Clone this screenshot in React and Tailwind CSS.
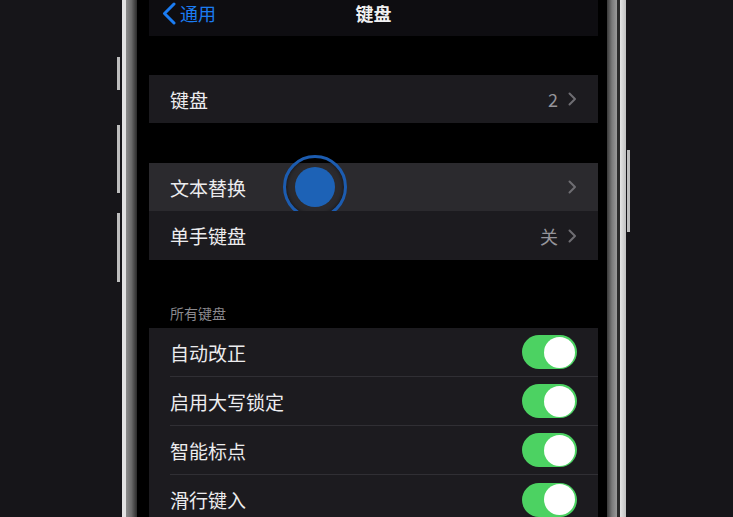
import React from "react";

const font = { fontFamily: '"Noto Sans CJK SC", "Noto Sans", sans-serif' };

function Chevron() {
  return (
    <svg width="9" height="14" viewBox="0 0 9 14" className="ml-[10px]">
      <path d="M1.5 1.5 L7 7 L1.5 12.5" fill="none" stroke="#6e6d72" strokeWidth="2" strokeLinecap="round" strokeLinejoin="round" />
    </svg>
  );
}

function Toggle() {
  return (
    <div className="w-[55px] h-[34px] rounded-full bg-[#4cd262] flex items-center justify-end pr-[2px]">
      <div className="w-[31px] h-[31px] rounded-full bg-white" />
    </div>
  );
}

function Row({ label, value, chevron, toggle, sep, h = "h-[48px]", bg = "bg-[#1c1b1f]", children }) {
  return (
    <div className={`relative shrink-0 ${h} ${bg} flex`}>
      <div className={`flex-1 ml-[21px] pr-[21px] flex items-center ${sep ? "border-b border-[#302f34]" : ""}`}>
        <span className="text-[19px] text-[#ececee] leading-none flex-1">{label}</span>
        {value && <span className="text-[18px] text-[#95949a] leading-none">{value}</span>}
        {chevron && <Chevron />}
        {toggle && <Toggle />}
      </div>
      {children}
    </div>
  );
}

export default function App() {
  return (
    <div className="w-[733px] h-[517px] overflow-hidden flex bg-[#161519]" style={font}>
      <div className="w-[117px] shrink-0" />
      <div className="w-[3px] shrink-0 flex flex-col">
        <div className="mt-[57px] h-[33px] shrink-0 bg-[#bdbdbd]" />
        <div className="mt-[35px] h-[68px] shrink-0 bg-[#bdbdbd]" />
        <div className="mt-[20px] h-[69px] shrink-0 bg-[#bdbdbd]" />
      </div>
      <div className="w-[2px] shrink-0" />
      <div className="w-[4px] shrink-0 bg-[#e2e2e2]" />
      <div className="w-[11px] shrink-0 bg-gradient-to-r from-[#8c8c8c] via-[#6a6a6a] to-[#2c2c2c]" />
      <div className="w-[470px] shrink-0 bg-black pl-[12px] pr-[9px] flex flex-col overflow-hidden">
        <div className="h-[36px] shrink-0 bg-[#0e0d11] relative">
          <div className="absolute left-[12px] top-[2px] flex items-center">
            <svg width="16" height="23" viewBox="0 0 16 23">
              <path d="M13 2 L3.5 11.5 L13 21" fill="none" stroke="#1b7cf2" strokeWidth="3" strokeLinecap="round" strokeLinejoin="round" />
            </svg>
            <span className="ml-[3px] text-[18px] text-[#1b7cf2] leading-[22px] mb-[1px]">通用</span>
          </div>
          <div className="absolute left-0 right-0 top-[1px] text-center text-[18px] font-bold text-[#f0f0f2] leading-[24px]">键盘</div>
        </div>
        <div className="mt-[39px] shrink-0">
          <Row label="键盘" value="2" chevron />
        </div>
        <div className="mt-[40px] shrink-0">
          <Row label="文本替换" chevron bg="bg-[#2b2a2e]">
            <div className="absolute left-[134px] top-[-8px] w-[64px] h-[64px] rounded-full border-[3px] border-[#1c5cb0] flex items-center justify-center shadow-[inset_0_0_4px_rgba(0,0,0,0.6)]">
              <div className="w-[40px] h-[40px] rounded-full bg-[#1d62b6]" />
            </div>
          </Row>
          <Row label="单手键盘" value="关" chevron h="h-[49px]" />
        </div>
        <div className="h-[68px] shrink-0 flex items-end pb-[8px] pl-[21px]">
          <span className="text-[14px] leading-none text-[#8a898e]">所有键盘</span>
        </div>
        <Row label="自动改正" toggle sep h="h-[49px]" />
        <Row label="启用大写锁定" toggle sep h="h-[49px]" />
        <Row label="智能标点" toggle sep h="h-[49px]" />
        <Row label="滑行键入" toggle h="h-[49px]" />
      </div>
      <div className="w-[10px] shrink-0 bg-gradient-to-r from-[#3a3a3a] via-[#7a7a7a] to-[#9a9a9a]" />
      <div className="w-[3px] shrink-0 bg-[#2a2a2a]" />
      <div className="w-[6px] shrink-0 bg-gradient-to-r from-[#e6e6e6] to-[#c0c0c0]" />
      <div className="w-[1px] shrink-0" />
      <div className="w-[3px] shrink-0 flex flex-col">
        <div className="mt-[150px] h-[82px] shrink-0 bg-[#bdbdbd]" />
      </div>
    </div>
  );
}
